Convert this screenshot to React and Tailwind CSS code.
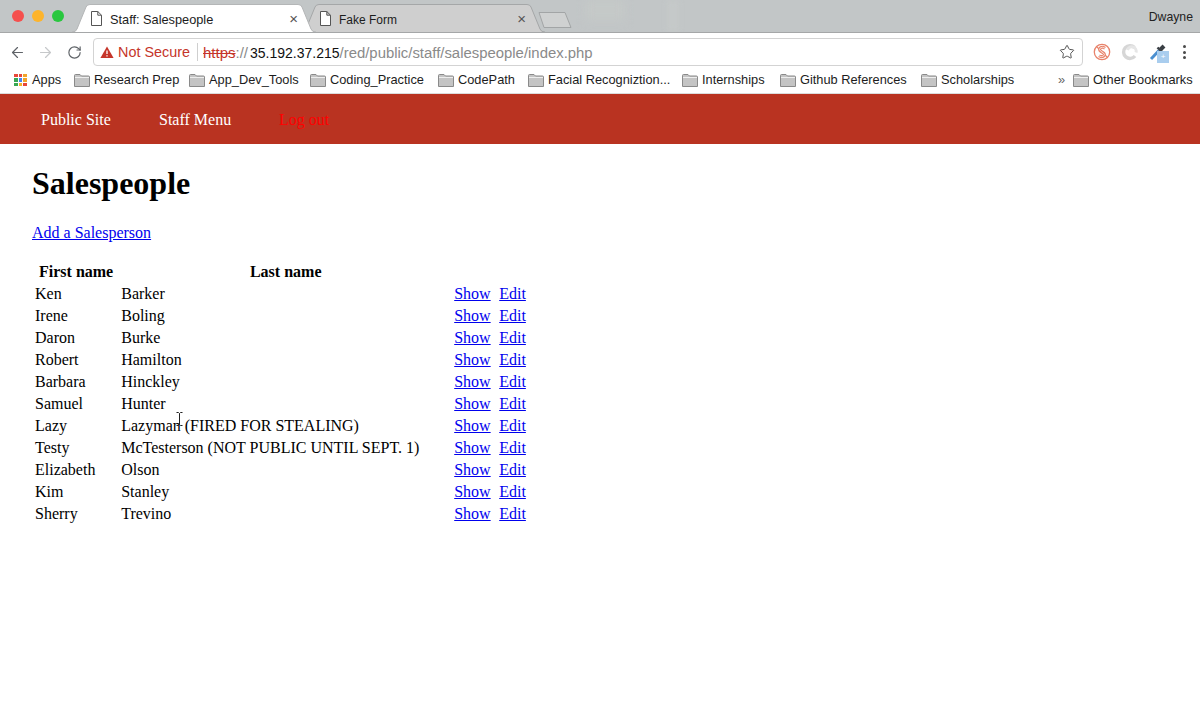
import { ArrowLeft, ArrowRight, RotateCw, Star } from "lucide-react";

const people = [
  ["Ken", "Barker"],
  ["Irene", "Boling"],
  ["Daron", "Burke"],
  ["Robert", "Hamilton"],
  ["Barbara", "Hinckley"],
  ["Samuel", "Hunter"],
  ["Lazy", "Lazyman (FIRED FOR STEALING)"],
  ["Testy", "McTesterson (NOT PUBLIC UNTIL SEPT. 1)"],
  ["Elizabeth", "Olson"],
  ["Kim", "Stanley"],
  ["Sherry", "Trevino"],
];

const bookmarks = [
  { label: "Research Prep", width: "w-[115px]" },
  { label: "App_Dev_Tools", width: "w-[121px]" },
  { label: "Coding_Practice", width: "w-[128px]" },
  { label: "CodePath", width: "w-[90px]" },
  { label: "Facial Recogniztion...", width: "w-[154px]" },
  { label: "Internships", width: "w-[98px]" },
  { label: "Github References", width: "w-[141px]" },
  { label: "Scholarships", width: "w-[137px]" },
];

const appColors = [
  "#e8483a", "#e8483a", "#f2a42b",
  "#37a853", "#4285f4", "#f2a42b",
  "#37a853", "#f2b32b", "#e8483a",
];

function DocIcon() {
  return (
    <svg width="11" height="15" viewBox="0 0 11 15" fill="none" className="shrink-0">
      <path d="M0.5 0.5H6.8L10.5 4.2V14.5H0.5Z M6.8 0.5V4.2H10.5" fill="#fff" stroke="#555" strokeWidth="1" />
    </svg>
  );
}

function Folder() {
  return (
    <svg width="16" height="13" viewBox="0 0 16 13" className="shrink-0">
      <path d="M0.5 1.5Q0.5 0.5 1.5 0.5H6L7.5 2H14.5Q15.5 2 15.5 3V12.5H0.5Z" fill="#c4c4c4" stroke="#8a8a8a" />
      <path d="M1 3.5H15" stroke="#eeeeee" />
    </svg>
  );
}

function Tab({ title, active }) {
  return (
    <div className={`relative flex h-[28px] w-[244px] shrink-0 items-center pl-[19px] pr-[16px] ${active ? "z-10 text-[12.75px]" : "-ml-[15px] text-[12px]"}`}>
      <svg className="absolute inset-0 h-full w-full" viewBox="0 0 244 28" preserveAspectRatio="none">
        <path
          d="M0 28Q4 28 5 25L14 3Q15 0.5 18 0.5H226Q229 0.5 230 3L239 25Q240 28 244 28"
          fill={active ? "#ffffff" : "#cfcfcf"}
          stroke={active ? "#b4b6b7" : "#a5a7a8"}
        />
      </svg>
      <div className="relative flex w-full items-center">
        <DocIcon />
        <span className="ml-[8px] pt-[3px] text-[#1c1c1c]">{title}</span>
        <span className={`ml-auto text-[15px] leading-none text-[#555] ${active ? "mr-[2px]" : "mr-[3px]"}`}>×</span>
      </div>
    </div>
  );
}

function AppsIcon() {
  return (
    <div className="grid h-[13px] w-[13px] grid-cols-3 gap-[1px]">
      {appColors.map((color, i) => (
        <span key={i} className="h-[3.6px] w-[3.6px]" style={{ backgroundColor: color }} />
      ))}
    </div>
  );
}

function ExtensionIcons() {
  return (
    <div className="flex items-center">
      <svg width="18" height="18" viewBox="0 0 18 18" fill="none" className="ml-[10px]">
        <circle cx="9" cy="9" r="7.7" stroke="#e8836b" strokeWidth="1.3" />
        <path d="M3.6 3.6L6 6M12 12L14.4 14.4" stroke="#e8836b" strokeWidth="1.3" />
        <path d="M12 5.2Q9.5 3.6 7.4 4.8Q5.5 6.4 7.8 8.3L10.4 9.9Q12.4 11.6 10.5 13.1Q8.4 14.3 6 12.8" stroke="#e8836b" strokeWidth="3" />
        <path d="M12 5.2Q9.5 3.6 7.4 4.8Q5.5 6.4 7.8 8.3L10.4 9.9Q12.4 11.6 10.5 13.1Q8.4 14.3 6 12.8" stroke="#fbe3dc" strokeWidth="1" />
      </svg>
      <svg width="18" height="18" viewBox="0 0 18 18" fill="none" className="ml-[10px]">
        <path d="M13.5 4.5A6.4 6.4 0 1 0 14 13" stroke="#d6d6d6" strokeWidth="3.4" />
        <path d="M6.5 7A3.4 3.4 0 0 1 15 9.5" stroke="#e6e6e6" strokeWidth="3" />
      </svg>
      <div className="relative ml-[10px] h-[18px] w-[18px]">
        <svg width="18" height="18" viewBox="0 0 18 18" fill="none">
          <path d="M2 16L10 7.5" stroke="#4a8fd0" strokeWidth="3" />
          <path d="M8.5 4.5L13.5 9.5" stroke="#3a3f44" strokeWidth="2.4" />
          <path d="M11.5 6.5L15 3" stroke="#3a3f44" strokeWidth="4" />
        </svg>
        <span className="absolute left-[8px] top-[8px] flex h-[12px] w-[12px] items-center justify-center bg-[#a9cdee] text-[8px] leading-none text-white">+</span>
      </div>
      <div className="ml-[16px] flex flex-col gap-[2.5px]">
        <span className="h-[3px] w-[3px] rounded-full bg-[#4a4a4a]" />
        <span className="h-[3px] w-[3px] rounded-full bg-[#4a4a4a]" />
        <span className="h-[3px] w-[3px] rounded-full bg-[#4a4a4a]" />
      </div>
    </div>
  );
}

function BrowserChrome() {
  return (
    <div className="font-['Liberation_Sans',Arial,sans-serif]">
      {/* tab strip */}
      <div className="relative flex h-[33px] items-end overflow-hidden border-b border-[#a5a7a8] bg-[#c2c6c7] pl-[72px]">
        {/* faint wallpaper marks behind the strip */}
        <div className="absolute left-[585px] top-0 h-[20px] w-[40px] bg-[#c5c9c8] blur-[5px]" />
        <div className="absolute left-[668px] top-0 h-[32px] w-[10px] bg-[#c6cac9] blur-[3px]" />
        <div className="absolute left-[12px] top-[10px] flex gap-[8px]">
          <span className="h-[12px] w-[12px] rounded-full bg-[#f5504e]" />
          <span className="h-[12px] w-[12px] rounded-full bg-[#fdb42c]" />
          <span className="h-[12px] w-[12px] rounded-full bg-[#29c73f]" />
        </div>
        <Tab title="Staff: Salespeople" active />
        <Tab title="Fake Form" />
        <svg width="34" height="16" viewBox="0 0 34 16" className="relative mb-[4px] -ml-[7px] shrink-0">
          <path d="M1 0.5H27L33 15.5H6Z" fill="#cfd1d1" stroke="#a2a5a6" />
        </svg>
        <span className="relative ml-auto self-center pr-[7px] pt-[3px] text-[12.25px] text-[#222]">Dwayne</span>
      </div>

      {/* toolbar */}
      <div className="flex h-[33px] items-center bg-white pl-[9px] pr-[10px] pt-[5px]">
        <ArrowLeft size={17} strokeWidth={1.7} className="text-[#5f6368]" />
        <ArrowRight size={17} strokeWidth={1.7} className="ml-[11px] text-[#c6c8ca]" />
        <RotateCw size={15} strokeWidth={1.9} className="ml-[13px] text-[#5f6368]" />
        <div className="ml-[11px] flex h-[28px] w-[990px] items-center rounded-[4px] border border-[#d3d3d3] pl-[6px] pr-[7px]">
          <svg width="14" height="12" viewBox="0 0 14 12" className="shrink-0">
            <path d="M7 0.5L13.6 12H0.4Z" fill="#c5352a" />
            <path d="M7 4.5V8M7 9.2V10.6" stroke="#fff" strokeWidth="1.3" />
          </svg>
          <span className="ml-[4px] pt-[2px] text-[14.4px] text-[#c5352a]">Not Secure</span>
          <span className="ml-[7px] mr-[5px] h-[18px] w-px bg-[#cfcfcf]" />
          <span className="pt-[2px] text-[15px] text-[#c5352a] line-through">https</span>
          <span className="pt-[2px] pr-[2px] text-[15px] text-[#8a8a8a]">://</span>
          <span className="pt-[2px] text-[14px] text-[#111]">35.192.37.215</span>
          <span className="pt-[2px] text-[14.9px] text-[#8a8a8a]">/red/public/staff/salespeople/index.php</span>
          <Star size={16} strokeWidth={1.5} className="ml-auto text-[#555]" />
        </div>
        <ExtensionIcons />
      </div>

      {/* bookmarks */}
      <div className="flex h-[28px] items-center border-b border-[#dcdcdc] bg-white pl-[14px] pt-[1px] text-[12.8px] text-[#1c1c1c]">
        <div className="flex w-[60px] items-center gap-[5px]">
          <AppsIcon />
          <span>Apps</span>
        </div>
        {bookmarks.map((b) => (
          <div key={b.label} className={`flex items-center gap-[4px] whitespace-nowrap ${b.width}`}>
            <Folder />
            <span>{b.label}</span>
          </div>
        ))}
        <span className="w-[15px] text-[#666]">»</span>
        <div className="flex items-center gap-[4px] whitespace-nowrap">
          <Folder />
          <span>Other Bookmarks</span>
        </div>
      </div>
    </div>
  );
}

export default function App() {
  return (
    <div className="relative h-[720px] w-[1200px] overflow-hidden bg-white font-['Liberation_Serif','Times_New_Roman',serif] text-[16px] text-black">
      <BrowserChrome />

      {/* staff nav */}
      <nav className="flex h-[50px] items-center bg-[#b93321] pl-[41px] pt-[2px]">
        <a className="w-[118px] text-white">Public Site</a>
        <a className="w-[120px] text-white">Staff Menu</a>
        <a className="text-[#ff0000]">Log out</a>
      </nav>

      <main className="px-[32px]">
        <h1 className="mt-[21px] text-[32px] font-bold leading-[37px]">Salespeople</h1>
        <a href="#" className="mt-[22px] block w-fit leading-[18px] text-[#0000ee] underline">Add a Salesperson</a>
        <table className="mt-[18px] table-fixed border-separate border-spacing-[2px] leading-[18px]">
          <thead>
            <tr className="h-[20px]">
              <th className="w-[84px] whitespace-nowrap px-[5px] py-0 text-center font-bold">First name</th>
              <th className="w-[331px] whitespace-nowrap px-[5px] py-0 text-center font-bold">Last name</th>
              <th className="w-[43px] p-0"></th>
              <th className="w-[30px] p-0"></th>
            </tr>
          </thead>
          <tbody>
            {people.map(([first, last]) => (
              <tr key={first} className="h-[20px]">
                <td className="whitespace-nowrap p-px">{first}</td>
                <td className="whitespace-nowrap p-px">{last}</td>
                <td className="p-px"><a href="#" className="text-[#0000ee] underline">Show</a></td>
                <td className="p-px"><a href="#" className="text-[#0000ee] underline">Edit</a></td>
              </tr>
            ))}
          </tbody>
        </table>
      </main>

      {/* text cursor */}
      <svg width="7" height="14" viewBox="0 0 7 14" fill="none" stroke="#222" className="absolute left-[176px] top-[412px]">
        <path d="M0.5 0.5H2.5L3.5 1.5L4.5 0.5H6.5M3.5 1.5V12.5M0.5 13.5H2.5L3.5 12.5L4.5 13.5H6.5" />
      </svg>
    </div>
  );
}
